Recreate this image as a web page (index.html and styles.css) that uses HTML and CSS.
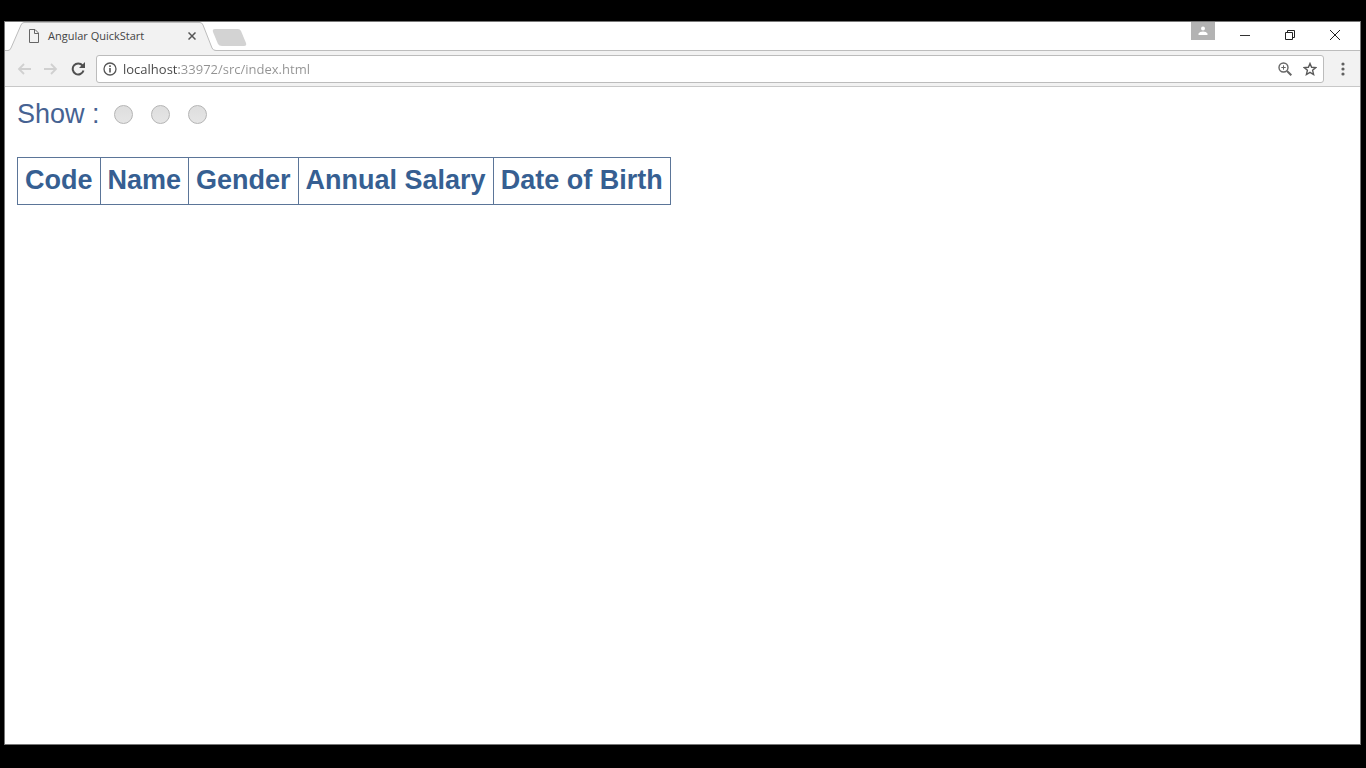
FILE: index.html
```html
<!DOCTYPE html>
<html lang="en">
<head>
<meta charset="utf-8">
<title>Angular QuickStart</title>
<link rel="stylesheet" href="styles.css">
</head>
<body>
<div class="window">
  <header class="tab-strip">
    <svg class="tab-shapes" width="244" height="29" viewBox="0 0 244 29" aria-hidden="true">
      <path d="M0 29V28.500H3Q5 28.500 6 26L16 3Q17 .5 19 .5H195Q197 .5 198 3L207 26Q208 28.500 211 28.500V29Z" fill="#f2f2f2"/>
      <path d="M0 28.500H3Q5 28.500 6 26L16 3Q17 .5 19 .5H195Q197 .5 198 3L207 26Q208 28.500 211 28.500H244" fill="none" stroke="#bdbdbd"/>
      <path d="M210 7H233Q235 7 236 9L241 21Q242 24 239 24H217Q214 24 213 22L208 10Q207 7 210 7Z" fill="#d3d3d3"/>
    </svg>
    <div class="tab">
      <svg width="12" height="14" viewBox="0 0 12 14" fill="none" stroke="#666" aria-hidden="true"><path d="M1.500 .5H7L10.500 4V13.500H1.500ZM6.500 .5V4.500H10.500"/></svg>
      <span class="tab-title">Angular QuickStart</span>
      <button class="icon-button" aria-label="Close tab"><svg width="8" height="8" viewBox="0 0 8 8" stroke="#555" stroke-width="1.500"><path d="M.5 .5L7.500 7.500M7.500 .5L.5 7.500"/></svg></button>
    </div>
    <div class="window-buttons">
      <button class="profile" aria-label="Profile"><svg width="10" height="10" viewBox="0 0 10 10" fill="#fff"><circle cx="5" cy="2.500" r="2"/><path d="M.5 9V7.500Q1.500 5.500 5 5.500T9.500 7.500V9Z"/></svg></button>
      <button class="icon-button caption" aria-label="Minimize"><svg width="12" height="12" viewBox="0 0 12 12" stroke="#333"><path d="M1 6.500H11"/></svg></button>
      <button class="icon-button caption" aria-label="Restore"><svg width="12" height="12" viewBox="0 0 12 12" fill="none" stroke="#222"><path d="M1.500 3.500H8.500V10.500H1.500ZM3.500 3V1.500H10.500V8.500H9"/></svg></button>
      <button class="icon-button caption" aria-label="Close"><svg width="12" height="12" viewBox="0 0 12 12" stroke="#222"><path d="M1 1L11 11M11 1L1 11"/></svg></button>
    </div>
  </header>
  <nav class="toolbar" aria-label="Navigation">
    <button class="icon-button" aria-label="Back" disabled><svg width="14" height="12" viewBox="0 0 14 12" fill="none" stroke="#d0d0d0" stroke-width="1.800"><path d="M14 6H2M7 1L2 6L7 11"/></svg></button>
    <button class="icon-button" aria-label="Forward" disabled><svg width="14" height="12" viewBox="0 0 14 12" fill="none" stroke="#d0d0d0" stroke-width="1.800"><path d="M0 6H12M7 1L12 6L7 11"/></svg></button>
    <button class="icon-button" aria-label="Reload"><svg width="14" height="14" viewBox="0 0 14 14"><path d="M11.500 3.500A5.500 5.500 0 1 0 12.500 8.500" fill="none" stroke="#505050" stroke-width="2"/><path d="M14 0V6H8Z" fill="#505050"/></svg></button>
    <div class="address-bar">
      <svg width="14" height="14" viewBox="0 0 14 14" fill="none" stroke="#555" aria-hidden="true"><circle cx="7" cy="7" r="6" stroke-width="1.300"/><path d="M7 6V10.500M7 3.300V4.900" stroke-width="1.600"/></svg>
      <input class="address" type="text" aria-label="Address" value="localhost:33972/src/index.html" spellcheck="false">
      <button class="icon-button" aria-label="Zoom"><svg width="14" height="14" viewBox="0 0 14 14" fill="none" stroke="#666"><circle cx="5.500" cy="5.500" r="4.500" stroke-width="1.400"/><path d="M9 9L13.300 13.300" stroke-width="2"/><path d="M5.500 3.300V7.700M3.300 5.500H7.700"/></svg></button>
      <button class="icon-button" aria-label="Bookmark"><svg width="14" height="14" viewBox="0 0 14 14" fill="none" stroke="#5a5a5a" stroke-width="1.400"><path d="M7 1.500L8.600 5.300L12.800 5.600L9.600 8.300L10.600 12.500L7 10.300L3.400 12.500L4.400 8.300L1.200 5.600L5.400 5.300Z"/></svg></button>
    </div>
    <button class="icon-button" aria-label="Menu"><svg width="4" height="14" viewBox="0 0 4 14" fill="#606060"><circle cx="2" cy="2" r="1.600"/><circle cx="2" cy="7" r="1.600"/><circle cx="2" cy="12" r="1.600"/></svg></button>
  </nav>
  <main class="page">
    <div class="show" role="radiogroup" aria-labelledby="show-label">
      <span id="show-label">Show :</span>
      <input class="radio" type="radio" name="show" aria-label="First option">
      <input class="radio" type="radio" name="show" aria-label="Second option">
      <input class="radio" type="radio" name="show" aria-label="Third option">
    </div>
    <table class="employees">
      <thead><tr><th scope="col">Code</th><th scope="col">Name</th><th scope="col">Gender</th><th scope="col">Annual Salary</th><th scope="col">Date of Birth</th></tr></thead>
    </table>
  </main>
</div>
</body>
</html>
```
FILE: styles.css
```css
* { box-sizing: border-box; }
body {
  margin: 0;
  height: 100vh;
  padding: 21px 5px 23px 4px;
  display: flex;
  background: #000;
  font-family: "Open Sans", "Noto Sans", sans-serif;
}
svg { display: block; flex: none; }
.window {
  flex: 1;
  display: flex;
  flex-direction: column;
  background: #fff;
  border: 1px solid #777;
}
.icon-button, .profile {
  border: 0;
  padding: 0;
  background: none;
  display: flex;
  align-items: center;
  justify-content: center;
}
.tab-strip {
  position: relative;
  height: 29px;
  display: flex;
  justify-content: space-between;
  border-bottom: 1px solid #bdbdbd;
}
.tab-shapes { position: absolute; left: 0; top: 0; }
.tab {
  position: relative;
  width: 191px;
  padding-left: 23px;
  display: flex;
  align-items: center;
  gap: 8px;
}
.tab-title { flex: 1; font-size: 11px; line-height: 16px; color: #444; }
.window-buttons { display: flex; padding-right: 3px; }
.profile { width: 24px; height: 18px; background: #b3b3b3; margin-right: 7px; }
.caption { width: 45px; height: 26px; }
.toolbar {
  height: 36px;
  padding: 0 15px 0 12px;
  display: flex;
  align-items: center;
  gap: 13px;
  background: #f2f2f2;
  border-bottom: 1px solid #c8c8c8;
}
.address-bar {
  flex: 1;
  height: 28px;
  margin: 0 4px 0 -2px;
  padding: 0 6px;
  display: flex;
  align-items: center;
  gap: 6px;
  background: #fff;
  border: 1px solid #bcbcbc;
  border-radius: 3px;
}
.address-bar .icon-button { margin-left: 5px; }
.address {
  flex: 1;
  min-width: 0;
  height: 20px;
  border: 0;
  padding: 0;
  outline: 0;
  font: 13px/20px "Open Sans", "Noto Sans", sans-serif;
  color: transparent;
  caret-color: #444;
  background: linear-gradient(to right, #444 56px, #929292 56px);
  -webkit-background-clip: text;
  background-clip: text;
}
.page {
  flex: 1;
  padding: 11px 12px;
  font: 27px/32px "Liberation Sans", Arial, sans-serif;
  color: #466292;
}
.show { display: flex; align-items: center; gap: 18px; }
.show span { margin-right: -4px; }
.radio {
  appearance: none;
  width: 19px;
  height: 19px;
  margin: 0;
  border: 1px solid #b4b4b4;
  border-radius: 50%;
  background: linear-gradient(#dedede, #e5e5e5);
}
.employees { margin-top: 27px; border-collapse: collapse; color: #365f92; }
.employees th { padding: 6px 7px 8px; line-height: 32px; border: 1px solid #5b7598; }
```
